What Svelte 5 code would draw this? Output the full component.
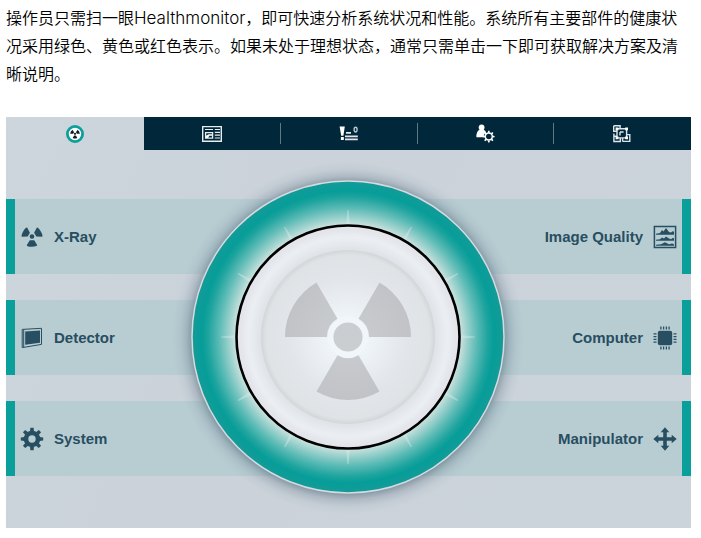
<script>
  const rows = [
    [{ label: 'X-Ray', icon: 'xray' }, { label: 'Image Quality', icon: 'quality' }],
    [{ label: 'Detector', icon: 'detector' }, { label: 'Computer', icon: 'computer' }],
    [{ label: 'System', icon: 'system' }, { label: 'Manipulator', icon: 'manipulator' }]
  ];
  const tabs = [
    { id: 'health', label: 'Health' },
    { id: 'report', label: 'Overview' },
    { id: 'messages', label: 'Messages' },
    { id: 'user', label: 'User settings' },
    { id: 'layout', label: 'Layout' }
  ];
  const ticks = Array.from({ length: 12 }, (_, i) => i * 30);
  const teeth = Array.from({ length: 8 }, (_, i) => i * 45);
  const blades = [0, 120, 240];
  let active = $state('health');
</script>

{#snippet icon(name)}
  <svg class="icon" viewBox="0 0 24 24" aria-hidden="true">
    {#if name === 'xray'}
      <circle cx="12" cy="11.5" r="2.3" />
      {#each blades as a}
        <path transform="rotate({a} 12 11.5)" d="M9.8 15.2h4.4l3.1 5Q16.5 21.6 12 21.7T6.7 20.2Z" />
      {/each}
    {:else if name === 'detector'}
      <path class="line" d="M2.2 3.4L21.5 2.3V18.4L2.2 21.6Z" />
      <path d="M5.2 5.4L20 4.4V16.8L5.2 18.8Z" />
      <path class="line" d="M3.7 4v17" />
    {:else if name === 'system'}
      <circle class="gear" cx="12" cy="12" r="6" />
      {#each teeth as a}
        <path transform="rotate({a} 12 12)" d="M10 4.5L10.4 .8h3.2L14 4.5Z" />
      {/each}
    {:else if name === 'quality'}
      <path class="line thick" d="M1.4 1.4h21.2v21.2H1.4Z" />
      <path d="M3 9.8V8.7l4-.7 2-3 1.5 1.5L13 3l3 4 2 .5L20 6l1 1v2.8ZM3 15.8v-1l4-.5 2-1.8 2 1 2-2 3 2 2 .7 2-1.5 1 .7v2.4ZM3 20.8v-1l5-.6 4-2 4 2 3-.7 2 .7v1.6Z" />
    {:else if name === 'computer'}
      <rect x="4.8" y="4.8" width="14.4" height="14.4" rx="2" />
      <path class="pins" d="M7.9 .5v3M10.6 .5v3M13.4 .5v3M16.1 .5v3M7.9 20.5v3M10.6 20.5v3M13.4 20.5v3M16.1 20.5v3M.5 7.9h3M.5 10.6h3M.5 13.4h3M.5 16.1h3M20.5 7.9h3M20.5 10.6h3M20.5 13.4h3M20.5 16.1h3" />
    {:else}
      <path d="M12 .3l4.3 5h-2.5v4.9h4.9V7.7l5 4.3-5 4.3v-2.5h-4.9v4.9h2.5l-4.3 5-4.3-5h2.5v-4.9H5.3v2.5L.3 12l5-4.3v2.5h4.9V5.3H7.7Z" />
    {/if}
  </svg>
{/snippet}

{#snippet tabIcon(name)}
  <svg class="tab-icon" viewBox="0 0 20 20" aria-hidden="true">
    {#if name === 'health'}
      <circle cx="10" cy="10" r="7.6" fill="#fff" stroke="#0b9f9b" stroke-width="2.8" />
      <g fill="#111b20">
        <circle cx="10" cy="9.8" r="1.1" />
        {#each blades as a}
          <path transform="rotate({a} 10 9.8)" d="M9.1 11.4h1.8l1.4 2.7q-2.3 1-4.6 0Z" />
        {/each}
      </g>
    {:else if name === 'report'}
      <g fill="none" stroke="#e8eef0">
        <path stroke-width="1.4" d="M.7 2.6h18.6v14.6H.7Z" />
        <path stroke-width="1.2" d="M3 5.5h8M12.8 5.5H18M12.8 8.4H18M12.8 11.2H18M12.8 14H18" />
        <path stroke-width="1.3" d="M3.6 8.6h7v5.6h-7Z" />
      </g>
      <path fill="#fff" d="M4 14v-2.2l2.6-1.6H10v1.6H7.4L6 14Z" />
    {:else if name === 'messages'}
      <path fill="#fff" d="M.6 2.6h5.2L4.4 11.7H2.2ZM1.9 13h2.9v3H1.9Z" />
      <path fill="none" stroke="#e1e8eb" stroke-width="1.8" d="M7 8.9h5M6 12.4h12.8M6 15.4h12.8" />
      <ellipse cx="16.6" cy="5.6" rx="1.5" ry="2.4" fill="none" stroke="#b9c7ce" stroke-width="1.4" />
    {:else if name === 'user'}
      <circle cx="5.6" cy="3.5" r="2.9" fill="#fff" />
      <path fill="#fff" d="M3.6 5.8h4Q11.2 7.4 11.2 13.2H.4Q.1 7.4 3.6 5.8Z" />
      <g transform="translate(12.8 12.6)">
        <circle r="5.1" fill="#00273a" />
        <circle r="3.5" fill="none" stroke="#fff" stroke-width="1.5" />
        {#each teeth as a}
          <path transform="rotate({a})" fill="#fff" d="M-1-3.8l.3-2H.7l.3 2Z" />
        {/each}
      </g>
    {:else}
      <g transform="translate(-1)">
        <path fill="none" stroke="#dce5e9" stroke-width="1.4" d="M1.7 1.7h6.4V4M1.7 1.7v5.6h3M5 4.7h9.6v9.2H5ZM1.9 9.5v8h6.4V14M1.9 12.2h3M10.6 17.4h7.2v-6.8H15M10.6 14v3.4M8 8v3.4M8 8h3.6" />
        <path fill="#fff" d="M3.6 3.4h2.8v2.8H3.6ZM13.2 3.4H16v2.8h-2.8ZM3.6 12.4h2.8v2.8H3.6ZM13.2 12.4H16v2.8h-2.8Z" />
      </g>
    {/if}
  </svg>
{/snippet}

<main>
  <p>操作员只需扫一眼<span class="latin">Healthmonitor</span>，即可快速分析系统状况和性能。系统所有主要部件的健康状况采用绿色、黄色或红色表示。如果未处于理想状态，通常只需单击一下即可获取解决方案及清晰说明。</p>

  <section class="monitor" aria-label="Healthmonitor">
    <nav>
      {#each tabs as tab}
        <button class="tab" class:active={active === tab.id} aria-label={tab.label} onclick={() => (active = tab.id)}>
          {@render tabIcon(tab.id)}
        </button>
      {/each}
    </nav>

    <div class="stage">
      <div class="rows">
        {#each rows as [left, right]}
          <div class="row">
            <button class="part">{@render icon(left.icon)}<span>{left.label}</span></button>
            <button class="part right"><span>{right.label}</span>{@render icon(right.icon)}</button>
          </div>
        {/each}

        <svg class="dial" viewBox="-179 -179 360 360" aria-hidden="true">
          <defs>
            <radialGradient id="shadow" gradientUnits="userSpaceOnUse" cx="0" cy="1" r="176">
              <stop offset=".88" stop-color="#566c7d" stop-opacity=".6" />
              <stop offset=".92" stop-color="#657c8d" stop-opacity=".28" />
              <stop offset=".96" stop-color="#72899a" stop-opacity=".09" />
              <stop offset="1" stop-color="#72899a" stop-opacity="0" />
            </radialGradient>
            <radialGradient id="glow" gradientUnits="userSpaceOnUse" cx="0" cy="0" r="157">
              <stop offset=".71" stop-color="#cfe4e0" />
              <stop offset=".75" stop-color="#a5d4d0" />
              <stop offset=".82" stop-color="#5dbbb6" />
              <stop offset=".89" stop-color="#1fa49f" />
              <stop offset=".93" stop-color="#069d98" />
              <stop offset="1" stop-color="#169b99" />
            </radialGradient>
            <radialGradient id="rim" gradientUnits="userSpaceOnUse" cx="0" cy="0" r="112">
              <stop offset=".78" stop-color="#dfe2e6" />
              <stop offset=".82" stop-color="#e4e7eb" />
              <stop offset=".89" stop-color="#ebeff3" />
              <stop offset=".95" stop-color="#e4e6ec" />
              <stop offset="1" stop-color="#e3e4ea" />
            </radialGradient>
            <radialGradient id="disc" gradientUnits="userSpaceOnUse" cx="0" cy="0" r="87">
              <stop offset="0" stop-color="#f5fafe" />
              <stop offset=".3" stop-color="#edf2f6" />
              <stop offset=".68" stop-color="#e2e6ea" />
              <stop offset=".94" stop-color="#dfe3e6" />
              <stop offset="1" stop-color="#d2d6d9" />
            </radialGradient>
            <radialGradient id="blade" gradientUnits="userSpaceOnUse" cx="0" cy="0" r="63">
              <stop offset="0" stop-color="#cbced1" />
              <stop offset="1" stop-color="#c1c3c7" />
            </radialGradient>
          </defs>
          <circle cy="1" r="176" fill="url(#shadow)" />
          <circle r="156" fill="url(#glow)" stroke="#d5dcdf" stroke-width="1.5" />
          {#each ticks as a}
            <path transform="rotate({a})" d="M-1.8-113L-.6-127H.6L1.8-113Z" fill="#d9ece9" opacity=".42" />
          {/each}
          <circle r="111.5" fill="url(#rim)" stroke="#000" stroke-width="2.6" />
          <circle r="87" fill="url(#disc)" />
          {#each blades as a}
            <path transform="rotate({a})" d="M10.5 18.2L31.5 54.6A63 63 0 0 1-31.5 54.6L-10.5 18.2A21 21 0 0 0 10.5 18.2Z" fill="url(#blade)" />
          {/each}
          <circle r="20.5" fill="#f1f6fa" />
          <circle r="14.6" fill="#caced0" />
        </svg>
      </div>
    </div>
  </section>
</main>

<style>
  :global(body) {
    margin: 0;
    background: #fff;
  }
  main {
    padding: 3px 10px 10px 6px;
  }
  p {
    margin: 0 0 30px;
    color: #000;
    font: 350 16px/28px 'Noto Sans CJK SC', sans-serif;
  }
  .latin {
    font-family: Inter, sans-serif;
    font-size: 17px;
    font-weight: 300;
    line-height: 17px;
  }
  .monitor {
    overflow: hidden;
    background: linear-gradient(115deg, #ccd6dc, #cbd2d9 40%, #ccd4db);
  }
  nav {
    display: grid;
    grid-template-columns: 138px repeat(4, 1fr);
  }
  button {
    margin: 0;
    padding: 0;
    border: 0;
    background: none;
    cursor: pointer;
  }
  .tab {
    position: relative;
    display: flex;
    align-items: center;
    justify-content: center;
    height: 33px;
    background: #00273a;
  }
  .tab.active {
    background: transparent;
  }
  .tab:not(.active):not(:last-child)::after {
    content: '';
    position: absolute;
    right: 0;
    top: 6px;
    bottom: 6px;
    width: 1px;
    background: #627984;
  }
  .tab-icon {
    width: 20px;
    height: 20px;
  }
  .stage {
    padding: 49px 0 52px;
  }
  .rows {
    position: relative;
    display: flex;
    flex-direction: column;
    gap: 26px;
  }
  .row {
    display: grid;
    grid-template-columns: 1fr 1fr;
    background: #b8cdd2;
  }
  .part {
    display: flex;
    align-items: center;
    gap: 10px;
    height: 75px;
    padding: 0 5px;
    border-left: 9px solid #0b9f9b;
    color: #284e61;
    font: bold 15px/20px 'Liberation Sans', Arial, sans-serif;
  }
  .part.right {
    justify-content: flex-end;
    border-left: 0;
    border-right: 9px solid #0b9f9b;
  }
  .icon {
    width: 24px;
    height: 24px;
    fill: #284e61;
  }
  .line {
    fill: none;
    stroke: #284e61;
    stroke-width: 1;
  }
  .thick {
    stroke-width: 1.5;
  }
  .pins {
    stroke: #284e61;
    stroke-width: 1.3;
  }
  .gear {
    fill: none;
    stroke: #284e61;
    stroke-width: 4.6;
  }
  .dial {
    position: absolute;
    top: 50%;
    left: 50%;
    width: 360px;
    height: 360px;
    transform: translate(-50%, -50%);
    pointer-events: none;
  }
</style>
